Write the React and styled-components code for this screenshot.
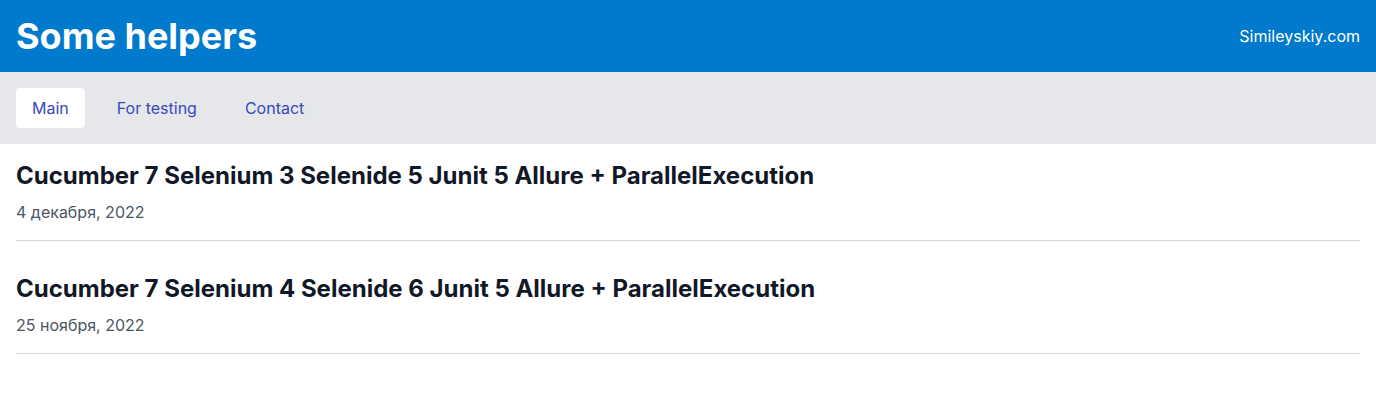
import styled, { createGlobalStyle } from "styled-components";

const GlobalStyle = createGlobalStyle`
  body {
    margin: 0;
    font-family: Inter, "Noto Sans", sans-serif;
    background: #ffffff;
  }
`;

const posts = [
  {
    title: "Cucumber 7 Selenium 3 Selenide 5 Junit 5 Allure + ParallelExecution",
    date: "4 декабря, 2022",
  },
  {
    title: "Cucumber 7 Selenium 4 Selenide 6 Junit 5 Allure + ParallelExecution",
    date: "25 ноября, 2022",
  },
];

const App = () => {
  return (
    <>
      <GlobalStyle />
      <Header>
        <Title>Some helpers</Title>
        <SiteLink href="#">Simileyskiy.com</SiteLink>
      </Header>
      <Nav>
        <NavLink href="#" $active>
          Main
        </NavLink>
        <NavLink href="#">For testing</NavLink>
        <NavLink href="#">Contact</NavLink>
      </Nav>
      <Main>
        {posts.map((post) => (
          <Post key={post.title}>
            <PostTitle>{post.title}</PostTitle>
            <PostDate>{post.date}</PostDate>
          </Post>
        ))}
      </Main>
    </>
  );
};

// Styled Components
const Header = styled.header`
  height: 72px;
  display: flex;
  align-items: center;
  justify-content: space-between;
  padding: 0 16px;
  background-color: #007acc;
`;

const Title = styled.h1`
  margin: 0;
  font-size: 36px;
  line-height: 40px;
  font-weight: 700;
  color: #ffffff;
`;

const SiteLink = styled.a`
  color: #ffffff;
  font-size: 16px;
  text-decoration: none;
`;

const Nav = styled.nav`
  height: 72px;
  box-sizing: border-box;
  display: flex;
  align-items: center;
  gap: 16px;
  padding: 0 16px;
  background-color: #e5e7eb;
`;

const NavLink = styled.a`
  padding: 8px 16px;
  font-size: 16px;
  line-height: 24px;
  color: #3949b8;
  text-decoration: none;
  border-radius: 4px;
  background-color: ${(p) => (p.$active ? "#ffffff" : "transparent")};
`;

const Main = styled.main`
  padding: 0 16px;
`;

const Post = styled.article`
  padding: 16px 0;
  border-bottom: 1px solid #d1d5db;

  & + & {
    margin-top: 16px;
  }
`;

const PostTitle = styled.h2`
  margin: 0;
  font-size: 24px;
  line-height: 32px;
  font-weight: 700;
  color: #111827;
`;

const PostDate = styled.p`
  margin: 8px 0 0;
  font-size: 16px;
  line-height: 24px;
  color: #4b5563;
`;

export default App;
